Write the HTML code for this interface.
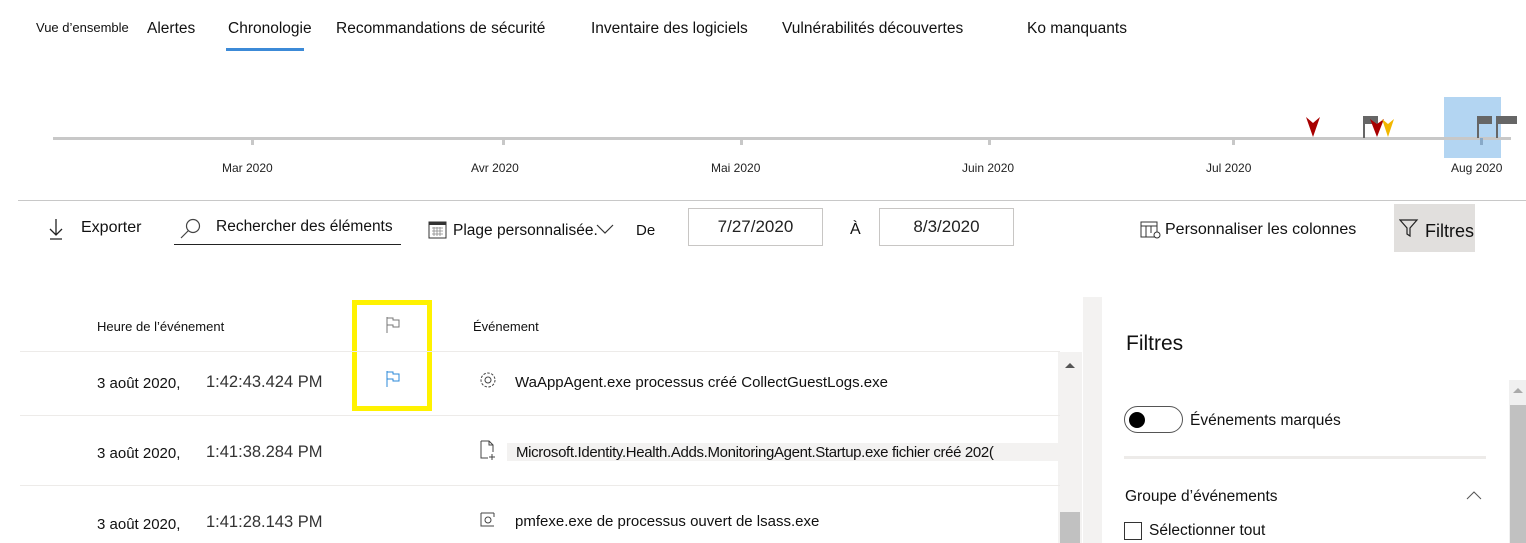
<!DOCTYPE html>
<html><head><meta charset="utf-8"><style>
*{margin:0;padding:0;box-sizing:border-box}
body{width:1526px;height:543px;overflow:hidden;background:#fff;font-family:"Liberation Sans",sans-serif;color:#111;position:relative}
.a{position:absolute;white-space:nowrap}
.tab{font-size:15.5px;top:20px}
.tl{font-size:12px;top:161px;color:#222}
.tick{position:absolute;top:138px;width:3px;height:7px;background:#c8c8c8}
.tb{font-size:16px}
.box{position:absolute;border:1px solid #c8c6c4;font-size:17px;text-align:center;line-height:36px;color:#222}
.hl{position:absolute;left:20px;width:1040px;height:1px;background:#edebe9}
.row{font-size:15px}
.tm{font-size:16.5px;color:#333}
</style></head><body>
<div class="a" style="left:36px;top:20px;font-size:13px">Vue d’ensemble</div>
<div class="a tab" style="left:147px">Alertes</div>
<div class="a tab" style="left:228px">Chronologie</div>
<div class="a" style="left:226px;top:48px;width:78px;height:3px;background:#3c8ad7"></div>
<div class="a tab" style="left:336px">Recommandations de sécurité</div>
<div class="a tab" style="left:591px">Inventaire des logiciels</div>
<div class="a tab" style="left:782px">Vulnérabilités découvertes</div>
<div class="a tab" style="left:1027px">Ko manquants</div>

<div class="a" style="left:1444px;top:97px;width:57px;height:61px;background:#b3d5f2"></div>
<div class="a" style="left:53px;top:137px;width:1458px;height:3px;background:#c8c8c8"></div>
<div class="tick" style="left:251px"></div><div class="tick" style="left:502px"></div><div class="tick" style="left:740px"></div><div class="tick" style="left:988px"></div><div class="tick" style="left:1232px"></div><div class="tick" style="left:1480px;background:#88a9c8"></div>
<div class="a tl" style="left:222px">Mar 2020</div>
<div class="a tl" style="left:471px">Avr 2020</div>
<div class="a tl" style="left:711px">Mai 2020</div>
<div class="a tl" style="left:962px">Juin 2020</div>
<div class="a tl" style="left:1206px">Jul 2020</div>
<div class="a tl" style="left:1451px">Aug 2020</div>
<svg class="a" style="left:1300px;top:110px" width="230" height="32">
<path d="M6 7 L13 13 L20 7 L13 27Z" fill="#a80000"/>
<rect x="63" y="6" width="2" height="22" fill="#666"/><rect x="65" y="6" width="13" height="8" fill="#666"/>
<path d="M70 9 L77 14 L84 9 L77 27Z" fill="#a80000"/>
<path d="M82 9 L88 14 L94 9 L88 27Z" fill="#f2b700"/>
<rect x="177" y="6" width="2" height="22" fill="#666"/><rect x="179" y="6" width="13" height="8" fill="#666"/>
<rect x="196" y="6" width="2" height="22" fill="#666"/><rect x="198" y="6" width="19" height="8" fill="#666"/>
</svg>
<div class="a" style="left:18px;top:200px;width:1508px;height:1px;background:#c8c8c8"></div>

<svg class="a" style="left:48px;top:218px" width="16" height="22"><path d="M8 1V17M2 11L8 17L14 11M2 21H14" stroke="#222" stroke-width="1.3" fill="none"/></svg>
<div class="a tb" style="left:81px;top:219px">Exporter</div>
<svg class="a" style="left:179px;top:217px" width="24" height="24"><circle cx="14" cy="9" r="6.5" stroke="#444" stroke-width="1.2" fill="none"/><path d="M9.5 13.5L2 21" stroke="#444" stroke-width="1.2"/></svg>
<div class="a tb" style="left:216px;top:218px;font-size:15.5px">Rechercher des éléments</div>
<div class="a" style="left:174px;top:244px;width:227px;height:1px;background:#222"></div>
<svg class="a" style="left:428px;top:220px" width="20" height="20"><rect x="1" y="2" width="17" height="16" stroke="#333" fill="none"/><rect x="1" y="2" width="17" height="3" fill="#333"/><path d="M4 8h11M4 11h11M4 14h11M6 7v9M9 7v9M12 7v9" stroke="#888" stroke-width="0.8"/></svg>
<div class="a tb" style="left:453px;top:222px;font-size:15.5px">Plage personnalisée.</div>
<svg class="a" style="left:596px;top:223px" width="18" height="12"><path d="M1 2L9 10L17 2" stroke="#333" stroke-width="1.2" fill="none"/></svg>
<div class="a" style="left:636px;top:222px;font-size:15px">De</div>
<div class="box" style="left:688px;top:208px;width:135px;height:38px">7/27/2020</div>
<div class="a" style="left:850px;top:221px;font-size:16px">À</div>
<div class="box" style="left:879px;top:208px;width:135px;height:38px">8/3/2020</div>
<svg class="a" style="left:1140px;top:220px" width="22" height="20"><rect x="1" y="2" width="16" height="15" stroke="#333" fill="none"/><path d="M1 6H17M6 6V17M11 6V13" stroke="#333"/><circle cx="17" cy="15" r="3" stroke="#333" fill="#fff"/></svg>
<div class="a tb" style="left:1165px;top:221px">Personnaliser les colonnes</div>
<div class="a" style="left:1394px;top:204px;width:81px;height:48px;background:#e1dfdd"></div>
<svg class="a" style="left:1399px;top:219px" width="20" height="18"><path d="M1 1H18L11 9V17L8 15V9Z" stroke="#222" stroke-width="1.2" fill="none"/></svg>
<div class="a" style="left:1425px;top:221px;font-size:18px">Filtres</div>

<div class="a" style="left:1083px;top:297px;width:19px;height:246px;background:#f3f2f1"></div>
<div class="a" style="left:1058px;top:352px;width:24px;height:191px;background:#f3f2f1"></div>
<div class="a" style="left:1060px;top:512px;width:20px;height:31px;background:#c1c1c1"></div>
<svg class="a" style="left:1064px;top:361px" width="12" height="8"><path d="M1 7L6 2L11 7Z" fill="#555"/></svg>

<div class="a" style="left:97px;top:319px;font-size:13px">Heure de l’événement</div>
<svg class="a" style="left:385px;top:316px" width="18" height="18"><path d="M2 1V17M2 2H8V4H14V11H8V9H2" stroke="#777" fill="none"/></svg>
<div class="a" style="left:473px;top:319px;font-size:13px">Événement</div>
<div class="a" style="left:352px;top:300px;width:80px;height:111px;border:5px solid #fff200"></div>
<div class="hl" style="top:351px"></div><div class="hl" style="top:415px"></div><div class="hl" style="top:485px"></div>

<div class="a row" style="left:97px;top:375px">3 août 2020,</div><div class="a tm" style="left:206px;top:373px">1:42:43.424 PM</div>
<svg class="a" style="left:385px;top:370px" width="18" height="18"><path d="M2 1V17M2 2H8V4H14V11H8V9H2" stroke="#2b88d8" fill="none"/></svg>
<svg class="a" style="left:478px;top:370px" width="20" height="20"><circle cx="10" cy="10" r="3" stroke="#444" fill="none"/><circle cx="10" cy="10" r="7" stroke="#444" stroke-dasharray="2.5 1.5" fill="none"/></svg>
<div class="a row" style="left:515px;top:374px">WaAppAgent.exe processus créé CollectGuestLogs.exe</div>

<div class="a row" style="left:97px;top:445px">3 août 2020,</div><div class="a tm" style="left:206px;top:443px">1:41:38.284 PM</div>
<svg class="a" style="left:479px;top:440px" width="18" height="20"><path d="M2 1H10L14 5V12M2 1V18H9M10 1V5H14M13 14V20M10 17H16" stroke="#444" fill="none"/></svg>
<div class="a" style="left:507px;top:443px;width:551px;height:18px;background:#f3f2f1"></div>
<div class="a row" style="left:516px;top:444px;letter-spacing:-0.35px">Microsoft.Identity.Health.Adds.MonitoringAgent.Startup.exe fichier créé 202(</div>

<div class="a row" style="left:97px;top:516px">3 août 2020,</div><div class="a tm" style="left:206px;top:513px">1:41:28.143 PM</div>
<svg class="a" style="left:478px;top:509px" width="20" height="22"><path d="M3 4H16M3 4V17H16M16 4V8" stroke="#444" fill="none"/><circle cx="10" cy="11" r="3" stroke="#444" fill="none"/></svg>
<div class="a row" style="left:515px;top:513px">pmfexe.exe de processus ouvert de lsass.exe</div>

<div class="a" style="left:1126px;top:332px;font-size:21px">Filtres</div>
<div class="a" style="left:1124px;top:406px;width:59px;height:27px;border:1px solid #555;border-radius:14px"></div>
<div class="a" style="left:1129px;top:412px;width:16px;height:16px;border-radius:50%;background:#000"></div>
<div class="a" style="left:1190px;top:412px;font-size:15.5px">Événements marqués</div>
<div class="a" style="left:1124px;top:456px;width:362px;height:3px;background:#edebe9"></div>
<div class="a" style="left:1125px;top:488px;font-size:15.5px">Groupe d’événements</div>
<svg class="a" style="left:1466px;top:490px" width="16" height="10"><path d="M1 9L8 2L15 9" stroke="#555" fill="none"/></svg>
<div class="a" style="left:1124px;top:522px;width:18px;height:18px;border:1px solid #333"></div>
<div class="a" style="left:1149px;top:522px;font-size:15.5px">Sélectionner tout</div>
<div class="a" style="left:1509px;top:380px;width:17px;height:163px;background:#f0f0f0"></div>
<div class="a" style="left:1510px;top:405px;width:16px;height:138px;background:#c1c1c1"></div>
<svg class="a" style="left:1512px;top:386px" width="12" height="8"><path d="M1 7L6 2L11 7Z" fill="#aaa"/></svg>
</body></html>
